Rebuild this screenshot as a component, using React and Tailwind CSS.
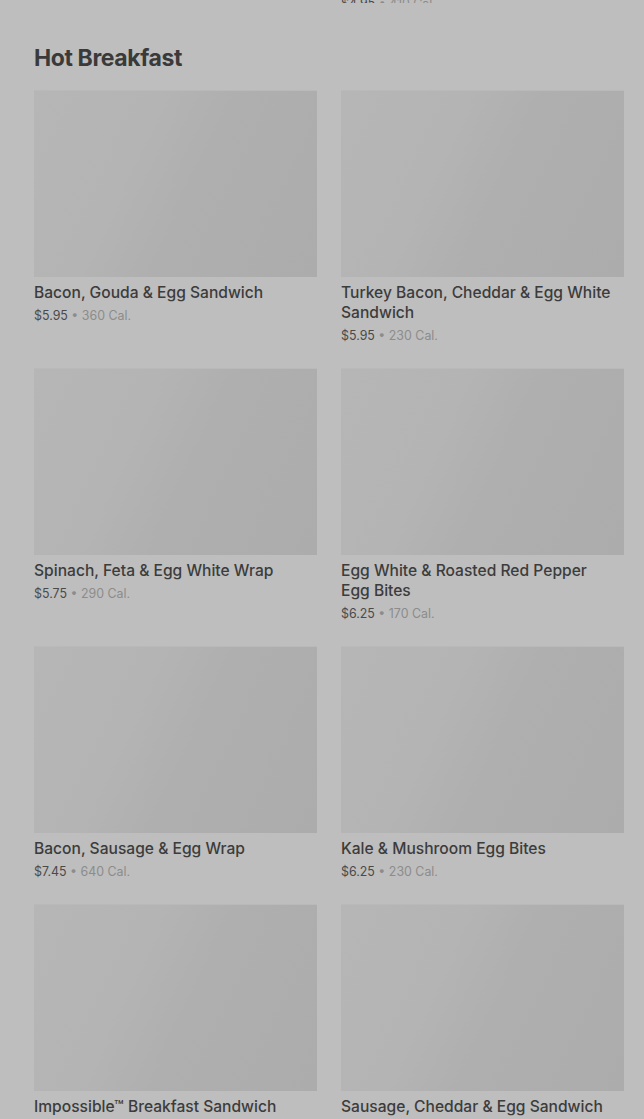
const items = [
  { name: "Bacon, Gouda & Egg Sandwich", price: "$5.95", cal: "360 Cal." },
  { name: "Turkey Bacon, Cheddar & Egg White Sandwich", price: "$5.95", cal: "230 Cal." },
  { name: "Spinach, Feta & Egg White Wrap", price: "$5.75", cal: "290 Cal." },
  { name: "Egg White & Roasted Red Pepper Egg Bites", price: "$6.25", cal: "170 Cal." },
  { name: "Bacon, Sausage & Egg Wrap", price: "$7.45", cal: "640 Cal." },
  { name: "Kale & Mushroom Egg Bites", price: "$6.25", cal: "230 Cal." },
  { name: "Impossible™ Breakfast Sandwich", price: "$6.45", cal: "420 Cal." },
  { name: "Sausage, Cheddar & Egg Sandwich", price: "$5.45", cal: "480 Cal." },
];

function Card({ item }) {
  return (
    <div className="flex flex-col">
      <div className="h-[187px] w-full border-t border-[#b9b9b9] bg-[linear-gradient(115deg,#b6b6b6_0%,#b4b4b4_35%,#afafaf_55%,#acacac_100%)]" />
      <div className="mt-[6px] pr-[8px] text-[15.6px] leading-[20px] font-medium text-[#3c3c3c]">
        {item.name}
      </div>
      <div className="mt-[4px] text-[12.4px] leading-[18px] text-[#4a4a4a]">
        {item.price}
        <span className="text-[#8c8c8c]"> • {item.cal}</span>
      </div>
    </div>
  );
}

export default function App() {
  return (
    <div
      className="min-h-[1119px] w-full bg-[#bebebe] pl-[34px] pr-[20px] overflow-hidden"
      style={{ fontFamily: "Inter, 'Liberation Sans', sans-serif" }}
    >
      <div className="grid grid-cols-2 gap-x-[24px] h-[3px] overflow-hidden">
        <div />
        <div className="flex flex-col justify-end h-[3px]">
          <div className="text-[12.4px] leading-[18px] text-[#4a4a4a] -mb-[10px]">
            $4.95<span className="text-[#8c8c8c]"> • 410 Cal.</span>
          </div>
        </div>
      </div>
      <h2 className="mt-[41px] text-[23px] leading-[28px] font-bold text-[#3a3a3a] tracking-[-0.4px]">
        Hot Breakfast
      </h2>
      <div className="mt-[18px] grid grid-cols-2 gap-x-[24px] gap-y-[23px]">
        {items.map((it) => (
          <Card key={it.name} item={it} />
        ))}
      </div>
    </div>
  );
}
